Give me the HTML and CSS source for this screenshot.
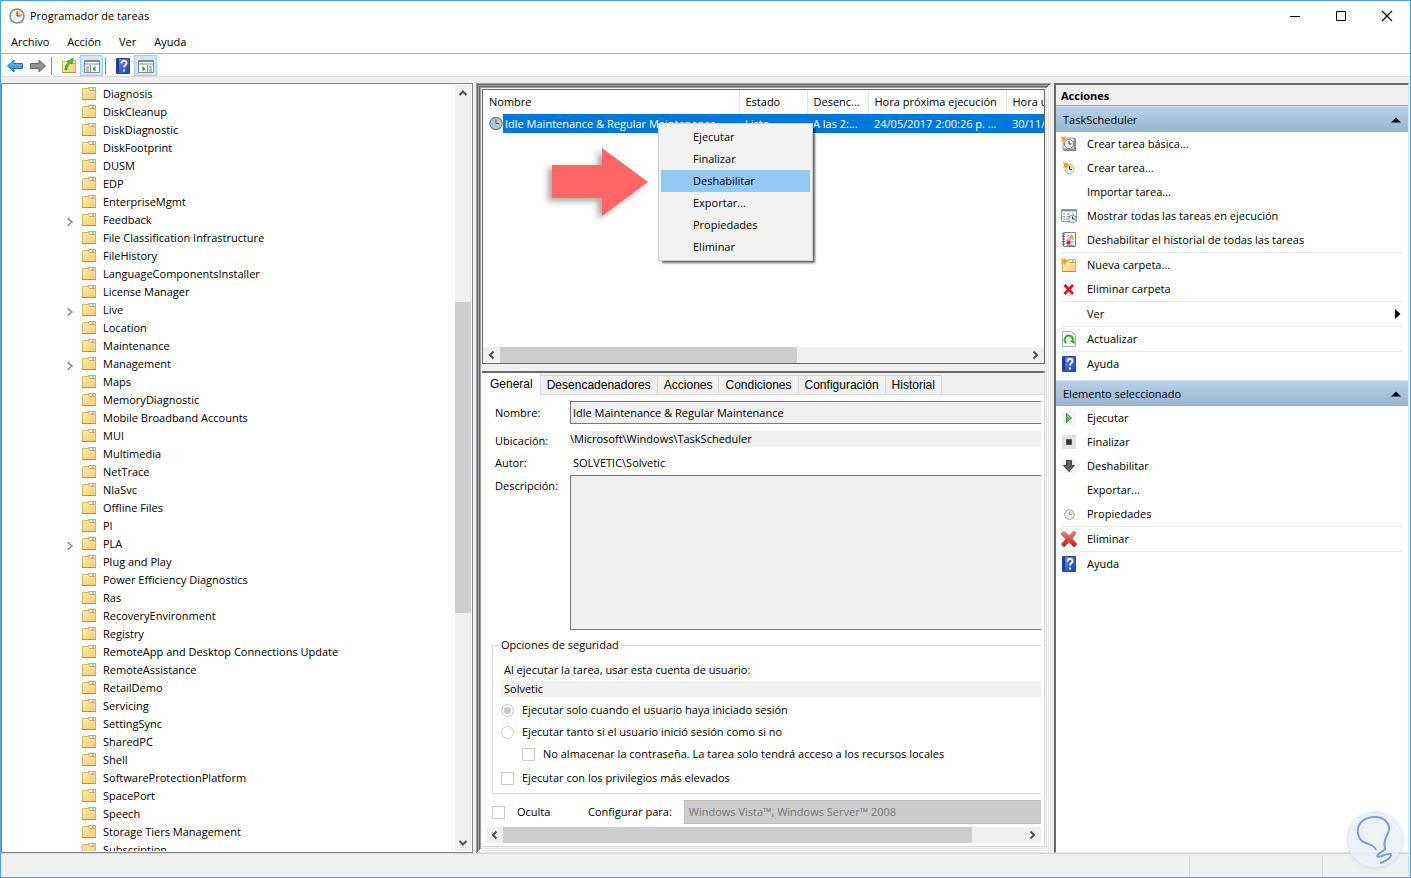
FILE: index.html
```
<!DOCTYPE html>
<html lang="es">
<head>
  <meta charset="UTF-8">
  <meta name="viewport" content="width=device-width, initial-scale=1.0">
  <title>Programador de tareas</title>
  <link rel="stylesheet" href="styles.css">
</head>
<body>
  <!-- shared icons -->
  <svg class="sprite" aria-hidden="true">
    <defs>
      <linearGradient id="g-folder" x1="0" y1="0" x2="1" y2="1"><stop offset="0" stop-color="#fce9ae"/><stop offset="1" stop-color="#f2cf74"/></linearGradient>
      <linearGradient id="g-blue" x1="0" y1="0" x2="0" y2="1"><stop offset="0" stop-color="#6fd0f8"/><stop offset="1" stop-color="#1585cc"/></linearGradient>
      <linearGradient id="g-help" x1="0" y1="0" x2="1" y2="1"><stop offset="0" stop-color="#6d92e6"/><stop offset="1" stop-color="#1f3fa8"/></linearGradient>
      <linearGradient id="g-green" x1="0" y1="0" x2="1" y2="1"><stop offset="0" stop-color="#9be37a"/><stop offset="1" stop-color="#1fa31a"/></linearGradient>
      <linearGradient id="g-red" x1="0" y1="0" x2="0" y2="1"><stop offset="0" stop-color="#f58a80"/><stop offset="1" stop-color="#d40c0c"/></linearGradient>
    </defs>
    <symbol id="i-folder" viewBox="0 0 14 14">
      <path d="M.5 1.500h13v11H.5z" fill="url(#g-folder)" stroke="#dcb565"/>
      <path d="M6.500.500h7v3H7.500z" fill="#fff3cf" stroke="#d3a955"/>
      <path d="M7.500 2h2.500" stroke="#fff"/>
      <path d="M10 2h2" stroke="#4b9fd6"/>
      <path d="M0 12.500h14" stroke="#b9924a"/>
    </symbol>
    <symbol id="i-clock" viewBox="0 0 16 16">
      <circle cx="8" cy="8" r="7" fill="#eef5fb" stroke="#8a8a8a" stroke-width="1.500"/>
      <path d="M8 8V2a6 6 0 0 1 6 6z" fill="#f5cf7a"/>
      <path d="M8 3.500V8h3.500" fill="none" stroke="#444"/>
    </symbol>
    <symbol id="i-clock-blue" viewBox="0 0 16 16">
      <circle cx="8" cy="8" r="7" fill="#a9c6e3" stroke="#667789" stroke-width="1.300"/>
      <path d="M8 8V2a6 6 0 0 1 6 6z" fill="#c5cfae"/>
      <path d="M8 3.500V8h3.500" fill="none" stroke="#3d4a58"/>
    </symbol>
    <symbol id="i-help" viewBox="0 0 16 16">
      <path d="M1.500.500h13v15h-13z" fill="url(#g-help)" stroke="#2747a8"/>
      <path d="M2 1h2v14H2z" fill="#1d3a93"/>
      <path d="M6.500 5.500C6.500 2 11.500 2 11.500 5c0 2-2.500 2.300-2.500 4.500M9 11.500v2" fill="none" stroke="#fff" stroke-width="1.800"/>
    </symbol>
    <symbol id="i-chevron" viewBox="0 0 8 8"><path d="M2 1l3.500 3L2 7" fill="none" stroke="currentColor" stroke-width="1.300"/></symbol>
    <symbol id="i-star" viewBox="0 0 8 8"><path d="M0 0l2.500 1.500L5 0l-.5 2.500L7 4l-2.500.5L4 7 2.500 5 0 6l1-2.500z" fill="#f5a01c"/></symbol>
    <symbol id="i-scroll" viewBox="0 0 16 16"><path d="M10 4.500L6.500 8l3.500 3.500" fill="none" stroke="#505050" stroke-width="2"/></symbol>
  </svg>

  <div class="window">
    <header class="titlebar">
      <svg class="app-icon"><use href="#i-clock"/></svg>
      <h1>Programador de tareas</h1>
      <div class="window-buttons">
        <button aria-label="Minimizar"><svg viewBox="0 0 12 12"><path d="M1 6.500h10" stroke="#000"/></svg></button>
        <button aria-label="Maximizar"><svg viewBox="0 0 12 12"><path d="M1.500 1.500h9v9h-9z" fill="none" stroke="#000"/></svg></button>
        <button aria-label="Cerrar"><svg viewBox="0 0 12 12"><path d="M1 1l10 10M11 1L1 11" stroke="#000" stroke-width="1.200"/></svg></button>
      </div>
    </header>

    <nav class="menubar">
      <button>Archivo</button>
      <button>Acción</button>
      <button>Ver</button>
      <button>Ayuda</button>
    </nav>

    <div class="toolbar">
      <button aria-label="Atrás"><svg viewBox="0 0 16 16"><path d="M.5 8L7 2v3.500h8.500v5H7V14z" fill="url(#g-blue)" stroke="#1b6fae"/></svg></button>
      <button aria-label="Adelante"><svg viewBox="0 0 16 16"><path d="M15.500 8L9 2v3.500H.5v5H9V14z" fill="#919191" stroke="#666"/></svg></button>
      <span class="divider"></span>
      <button aria-label="Subir un nivel"><svg viewBox="0 0 16 16"><use href="#i-folder" x="1" y="2" width="14" height="14"/><path d="M4 12C4 8 5 6 7.500 5L6 3.500 12 0l-1 6-1.500-1C7 7 6 9 6 12z" fill="#4cc02c" stroke="#2c8a1a" stroke-width=".6"/></svg></button>
      <button class="pressed" aria-label="Mostrar árbol"><svg viewBox="0 0 16 16"><path d="M.5 2.500h15v12H.5z" fill="#fff" stroke="#84888c"/><path d="M0 3.500h16M0 6h16M6.500 7v8" stroke="#84888c"/><path d="M2 9h3M2 11h3M2 13h3" stroke="#777"/><path d="M11.500 8v5.500L8.500 10.700z" fill="#25a51c"/></svg></button>
      <span class="divider"></span>
      <button aria-label="Ayuda"><svg><use href="#i-help"/></svg></button>
      <button class="pressed" aria-label="Mostrar acciones"><svg viewBox="0 0 16 16"><path d="M.5 2.500h15v12H.5z" fill="#fff" stroke="#84888c"/><path d="M0 3.500h16M0 6h16M9.500 7v8" stroke="#84888c"/><path d="M11 9h3M11 11h3M11 13h3" stroke="#777"/><path d="M4.500 8v5.500l3-2.800z" fill="#25a51c"/></svg></button>
    </div>

    <main>
      <section class="tree">
        <ul>
          <li><svg><use href="#i-folder"/></svg>Diagnosis</li>
          <li><svg><use href="#i-folder"/></svg>DiskCleanup</li>
          <li><svg><use href="#i-folder"/></svg>DiskDiagnostic</li>
          <li><svg><use href="#i-folder"/></svg>DiskFootprint</li>
          <li><svg><use href="#i-folder"/></svg>DUSM</li>
          <li><svg><use href="#i-folder"/></svg>EDP</li>
          <li><svg><use href="#i-folder"/></svg>EnterpriseMgmt</li>
          <li class="parent"><svg class="expander"><use href="#i-chevron"/></svg><svg><use href="#i-folder"/></svg>Feedback</li>
          <li><svg><use href="#i-folder"/></svg>File Classification Infrastructure</li>
          <li><svg><use href="#i-folder"/></svg>FileHistory</li>
          <li><svg><use href="#i-folder"/></svg>LanguageComponentsInstaller</li>
          <li><svg><use href="#i-folder"/></svg>License Manager</li>
          <li class="parent"><svg class="expander"><use href="#i-chevron"/></svg><svg><use href="#i-folder"/></svg>Live</li>
          <li><svg><use href="#i-folder"/></svg>Location</li>
          <li><svg><use href="#i-folder"/></svg>Maintenance</li>
          <li class="parent"><svg class="expander"><use href="#i-chevron"/></svg><svg><use href="#i-folder"/></svg>Management</li>
          <li><svg><use href="#i-folder"/></svg>Maps</li>
          <li><svg><use href="#i-folder"/></svg>MemoryDiagnostic</li>
          <li><svg><use href="#i-folder"/></svg>Mobile Broadband Accounts</li>
          <li><svg><use href="#i-folder"/></svg>MUI</li>
          <li><svg><use href="#i-folder"/></svg>Multimedia</li>
          <li><svg><use href="#i-folder"/></svg>NetTrace</li>
          <li><svg><use href="#i-folder"/></svg>NlaSvc</li>
          <li><svg><use href="#i-folder"/></svg>Offline Files</li>
          <li><svg><use href="#i-folder"/></svg>PI</li>
          <li class="parent"><svg class="expander"><use href="#i-chevron"/></svg><svg><use href="#i-folder"/></svg>PLA</li>
          <li><svg><use href="#i-folder"/></svg>Plug and Play</li>
          <li><svg><use href="#i-folder"/></svg>Power Efficiency Diagnostics</li>
          <li><svg><use href="#i-folder"/></svg>Ras</li>
          <li><svg><use href="#i-folder"/></svg>RecoveryEnvironment</li>
          <li><svg><use href="#i-folder"/></svg>Registry</li>
          <li><svg><use href="#i-folder"/></svg>RemoteApp and Desktop Connections Update</li>
          <li><svg><use href="#i-folder"/></svg>RemoteAssistance</li>
          <li><svg><use href="#i-folder"/></svg>RetailDemo</li>
          <li><svg><use href="#i-folder"/></svg>Servicing</li>
          <li><svg><use href="#i-folder"/></svg>SettingSync</li>
          <li><svg><use href="#i-folder"/></svg>SharedPC</li>
          <li><svg><use href="#i-folder"/></svg>Shell</li>
          <li><svg><use href="#i-folder"/></svg>SoftwareProtectionPlatform</li>
          <li><svg><use href="#i-folder"/></svg>SpacePort</li>
          <li><svg><use href="#i-folder"/></svg>Speech</li>
          <li><svg><use href="#i-folder"/></svg>Storage Tiers Management</li>
          <li><svg><use href="#i-folder"/></svg>Subscription</li>
        </ul>
        <div class="scrollbar vertical">
          <svg class="up"><use href="#i-scroll"/></svg>
          <div class="track"><span class="before"></span><span class="thumb"></span><span class="after"></span></div>
          <svg class="down"><use href="#i-scroll"/></svg>
        </div>
      </section>

      <section class="center">
        <div class="tasks">
          <div class="table-box">
            <table>
              <colgroup><col class="c-name"><col class="c-state"><col class="c-trigger"><col class="c-next"><col class="c-last"></colgroup>
              <thead>
                <tr><th>Nombre</th><th>Estado</th><th>Desenc...</th><th>Hora próxima ejecución</th><th>Hora ú</th></tr>
              </thead>
              <tbody>
                <tr><td class="name"><svg><use href="#i-clock-blue"/></svg><span>Idle Maintenance &amp; Regular Maintenance</span></td><td>Listo</td><td>A las 2:...</td><td>24/05/2017 2:00:26 p. ...</td><td>30/11/</td></tr>
              </tbody>
            </table>
          </div>
          <div class="scrollbar horizontal">
            <svg class="left"><use href="#i-scroll"/></svg>
            <div class="track"><span class="thumb"></span><span class="after"></span></div>
            <svg class="right"><use href="#i-scroll"/></svg>
          </div>

          <svg class="pointer" viewBox="0 0 110 84"><path d="M12 25h50V8l46 34-46 34V58H12z" fill="#ff6666"/></svg>
          <div class="context-menu" role="menu">
            <button role="menuitem">Ejecutar</button>
            <button role="menuitem">Finalizar</button>
            <button role="menuitem" class="active">Deshabilitar</button>
            <button role="menuitem">Exportar...</button>
            <button role="menuitem">Propiedades</button>
            <button role="menuitem">Eliminar</button>
          </div>
        </div>

        <div class="details">
          <div class="tabs" role="tablist">
            <button role="tab" class="current">General</button>
            <button role="tab">Desencadenadores</button>
            <button role="tab">Acciones</button>
            <button role="tab">Condiciones</button>
            <button role="tab">Configuración</button>
            <button role="tab">Historial</button>
          </div>
          <form>
            <div class="fields">
              <label for="name">Nombre:</label>
              <input id="name" class="boxed" type="text" readonly value="Idle Maintenance &amp; Regular Maintenance">
              <label for="place" class="low">Ubicación:</label>
              <input id="place" class="plain" type="text" readonly value="\Microsoft\Windows\TaskScheduler">
              <label for="author" class="author">Autor:</label>
              <output id="author" class="author">SOLVETIC\Solvetic</output>
              <label for="description" class="top">Descripción:</label>
              <textarea id="description" readonly></textarea>
            </div>
            <fieldset>
              <legend>Opciones de seguridad</legend>
              <label class="account" for="account">Al ejecutar la tarea, usar esta cuenta de usuario:</label>
              <input id="account" class="account-name" type="text" readonly value="Solvetic">
              <label class="option"><input type="radio" name="session" checked disabled>Ejecutar solo cuando el usuario haya iniciado sesión</label>
              <label class="option"><input type="radio" name="session" disabled>Ejecutar tanto si el usuario inició sesión como si no</label>
              <label class="option nested"><input type="checkbox" disabled>No almacenar la contraseña. La tarea solo tendrá acceso a los recursos locales</label>
              <label class="option last"><input type="checkbox" disabled>Ejecutar con los privilegios más elevados</label>
            </fieldset>
            <div class="form-footer">
              <label class="option"><input type="checkbox" disabled>Oculta</label>
              <label for="target">Configurar para:</label>
              <select id="target" disabled><option>Windows Vista™, Windows Server™ 2008</option></select>
            </div>
          </form>
          <div class="scrollbar horizontal wide">
            <svg class="left"><use href="#i-scroll"/></svg>
            <div class="track"><span class="thumb"></span><span class="after"></span></div>
            <svg class="right"><use href="#i-scroll"/></svg>
          </div>
        </div>
      </section>

      <aside class="actions">
        <h2>Acciones</h2>
        <h3>TaskScheduler <svg viewBox="0 0 10 6"><path d="M0 5.500L5 .5l5 5z"/></svg></h3>
        <div class="group">
          <button><svg viewBox="0 0 16 16"><path d="M2 2h12l1 2v11H3l-1-1z" fill="#8e8783"/><path d="M2 2h11v11H2z" fill="#f1ece8" stroke="#a09893"/><circle cx="8" cy="8" r="4.500" fill="#f8fbfd" stroke="#777"/><path d="M8 5v3h2.500" fill="none" stroke="#333"/><use href="#i-star" width="7" height="7"/></svg>Crear tarea básica...</button>
          <button><svg viewBox="0 0 16 16"><circle cx="8.500" cy="9" r="4.700" fill="#e8f1f8" stroke="#b8b8b0"/><path d="M9 9V5a4 4 0 0 1 4 4z" fill="#f4d07f"/><path d="M8.500 6v3.500H11" fill="none" stroke="#333"/><use href="#i-star" x="2" y="2" width="8" height="8"/></svg>Crear tarea...</button>
          <button><svg viewBox="0 0 16 16"></svg>Importar tarea...</button>
          <button><svg viewBox="0 0 16 16"><path d="M.5 1.500h15v12H.5z" fill="#fff" stroke="#999"/><path d="M0 2.500h16" stroke="#7b93ad" stroke-width="2"/><path d="M2 6h2M6 6h3M11 6h2M2 8.500h2M6 8.500h3M2 11h2M5 11h2" stroke="#888"/><circle cx="11.500" cy="11" r="3.800" fill="#dceaf5" stroke="#8c959c"/><path d="M11.500 8.500V11h2" fill="none" stroke="#333"/></svg>Mostrar todas las tareas en ejecución</button>
          <button><svg viewBox="0 0 16 16"><path d="M2.500.5h12v14h-12z" fill="#f8fafc" stroke="#71809a"/><path d="M1 2h3M1 4.500h3M1 7h3M1 9.500h3M1 12h3" stroke="#555"/><path d="M6 4h2M6 7h7M10 10h3M6 13.500h7" stroke="#7f93af"/><path d="M10.500 2l3 4h-6z" fill="#f2b31c"/><path d="M5.500 8.500h4v4h-4z" fill="#d9202c"/></svg>Deshabilitar el historial de todas las tareas</button>
        </div>
        <div class="group">
          <button><svg viewBox="0 0 16 16"><use href="#i-folder" x="1" y="2" width="14" height="14"/><use href="#i-star" x="0" y="1" width="8" height="8"/></svg>Nueva carpeta...</button>
          <button><svg viewBox="0 0 16 16"><path d="M1 2h14v13H1z" fill="#f5f5f5"/><path d="M3.500 4l8.500 9M12 4l-8.500 9" stroke="#d2162a" stroke-width="2.600"/></svg>Eliminar carpeta</button>
        </div>
        <div class="group">
          <button><svg viewBox="0 0 16 16"></svg>Ver<svg class="more" viewBox="0 0 6 10"><path d="M0 0l5.500 5L0 10z"/></svg></button>
        </div>
        <div class="group">
          <button><svg viewBox="0 0 16 16"><path d="M1.500.5h9l4 4v11h-13z" fill="#f6f8f6" stroke="#a9b0a9"/><path d="M5.500 12A4 4 0 1 1 11.500 10" fill="none" stroke="#35ae2e" stroke-width="2"/><path d="M8.500 9.500h5v4z" fill="#35ae2e"/></svg>Actualizar</button>
        </div>
        <div class="group">
          <button><svg><use href="#i-help"/></svg>Ayuda</button>
        </div>
        <h3 class="second">Elemento seleccionado <svg viewBox="0 0 10 6"><path d="M0 5.500L5 .5l5 5z"/></svg></h3>
        <div class="group">
          <button><svg viewBox="0 0 16 16"><path d="M1 1h14v14H1z" fill="#f5f5f5"/><path d="M5.500 3.500v9L10.500 8z" fill="url(#g-green)" stroke="#2aa51f"/></svg>Ejecutar</button>
          <button><svg viewBox="0 0 16 16"><path d="M1 1h14v14H1z" fill="#e2e2e2"/><path d="M5.500 5.500h5v5h-5z" fill="#2e3234" stroke="#555"/></svg>Finalizar</button>
          <button><svg viewBox="0 0 16 16"><path d="M1 1h14v14H1z" fill="#f5f5f5"/><path d="M5.500 2.500h5v5h3L8 13.500 2.500 7.500h3z" fill="#606060" stroke="#444"/></svg>Deshabilitar</button>
          <button><svg viewBox="0 0 16 16"></svg>Exportar...</button>
          <button><svg viewBox="0 0 16 16"><use href="#i-clock" x="3" y="3" width="11" height="11" opacity=".75"/></svg>Propiedades</button>
        </div>
        <div class="group">
          <button><svg viewBox="0 0 16 16"><path d="M0 3l3-2.500L8 5l4.500-5L15 2l-4 6 5 5-3 3-5-5-5 5-2.500-3L5 8z" fill="url(#g-red)" stroke="#b3262a" stroke-width=".6"/></svg>Eliminar</button>
        </div>
        <div class="group">
          <button><svg><use href="#i-help"/></svg>Ayuda</button>
        </div>
      </aside>
    </main>

    <footer class="statusbar"><span></span><span></span><span></span></footer>

    <svg class="brand" viewBox="0 0 60 60" aria-hidden="true">
      <circle cx="30" cy="30" r="27"/>
      <path d="M31 40C28 31 16 37 13 24C11 13 20 7 30 7C40 7 47 15 43 23C41 27 38 32 40 38C42 40 33 43 32 46C33 49 44 42 46 44C47 48 39 52 35 53"/>
    </svg>
  </div>
</body>
</html>
```
FILE: styles.css
```
* {
  box-sizing: border-box;
}
body {
  margin: 0;
  font-family: "Open Sans", "Noto Sans", sans-serif;
  font-size: 11px;
  line-height: 16px;
  color: #000;
}
button, input, select, textarea {
  font: inherit;
  color: inherit;
  margin: 0;
}
button {
  padding: 0;
  border: 0;
  background: none;
  text-align: left;
}
svg {
  display: block;
  flex: none;
  width: 16px;
  height: 16px;
}
.sprite {
  position: absolute;
  width: 0;
  height: 0;
}
.window {
  position: relative;
  display: flex;
  flex-direction: column;
  height: 100vh;
  border: 1px solid #4f9ff0;
  background: #f0f0f0;
}

/* title, menu and toolbar */
.titlebar {
  display: flex;
  align-items: center;
  height: 30px;
  padding-left: 8px;
  background: #fff;
}
.titlebar h1 {
  flex: 1;
  margin: 0 0 0 5px;
  font-size: 11px;
  font-weight: normal;
}
.window-buttons {
  display: flex;
}
.window-buttons button {
  display: grid;
  place-items: center;
  width: 46px;
  height: 28px;
}
.window-buttons svg {
  width: 12px;
  height: 12px;
}
.menubar {
  display: flex;
  align-items: center;
  gap: 18px;
  height: 22px;
  padding-left: 10px;
  background: #fff;
}
.toolbar {
  display: flex;
  align-items: center;
  height: 24px;
  padding: 1px 0 0 2px;
  border-top: 1px solid #aeb0b8;
  border-bottom: 1px solid #d9d9d9;
  background: #fff;
}
.toolbar button {
  display: grid;
  place-items: center;
  width: 23px;
  height: 21px;
}
.toolbar .pressed {
  border: 1px solid #99d1ff;
  background: #cce8ff;
}
.divider {
  width: 1px;
  height: 18px;
  margin: 0 5px 0 2px;
  background: #8d8d8d;
}

/* three columns */
main {
  flex: 1;
  display: grid;
  grid-template-columns: 472px minmax(0, 1fr) 355px;
  gap: 3px;
  min-height: 0;
  padding: 6px 1px 0 0;
}

/* folder tree */
.tree {
  display: flex;
  min-height: 0;
  padding: 1px 1px 1px 0;
  border: 1px solid #828790;
  background: #fff;
}
.tree ul {
  flex: 1;
  margin: 0;
  padding: 0;
  overflow: hidden;
  list-style: none;
}
.tree li {
  display: flex;
  align-items: center;
  gap: 7px;
  height: 18px;
  padding-left: 80px;
}
.tree li svg {
  width: 14px;
  height: 14px;
}
.tree .parent {
  padding-left: 63px;
}
.tree .parent .expander {
  width: 10px;
  height: 10px;
  margin-top: 4px;
  color: #8c8c8c;
}

/* scroll bars */
.scrollbar {
  display: flex;
  flex: none;
  background: #f0f0f0;
}
.scrollbar .track {
  flex: 1;
  display: flex;
}
.vertical {
  flex-direction: column;
  width: 16px;
}
.vertical .track {
  flex-direction: column;
}
.vertical .before {
  flex: 201;
}
.vertical .thumb {
  flex: 311;
}
.vertical .after {
  flex: 222;
}
.thumb {
  background: #cdcdcd;
}
.scrollbar .up {
  transform: rotate(90deg);
}
.scrollbar .down {
  transform: rotate(-90deg);
}
.scrollbar .right {
  transform: rotate(180deg);
}
.horizontal {
  height: 16px;
}
.horizontal svg {
  width: 17px;
}
.horizontal .thumb {
  flex: 298;
}
.horizontal .after {
  flex: 230;
}
.wide .thumb {
  flex: 469;
}
.wide .after {
  flex: 52;
}

/* task list */
.center {
  display: flex;
  flex-direction: column;
  min-height: 0;
  padding: 6px;
  background: #f0f0f0;
  box-shadow: inset 1px 1px #a0a0a0, inset -1px -1px #e3e3e3,
    inset 2px 2px #696969, inset -2px -2px #fff,
    inset 3px 3px #a0a0a0, inset -3px -3px #e3e3e3,
    inset 4px 4px #696969, inset -4px -4px #fff,
    inset 5px 5px #a0a0a0, inset -5px -5px #e3e3e3;
}
.tasks {
  position: relative;
  display: flex;
  flex: none;
  flex-direction: column;
  height: 275px;
  border: 1px solid #696969;
  background: #fff;
}
.table-box {
  flex: 1;
  overflow: hidden;
}
table {
  width: 100%;
  table-layout: fixed;
  border-collapse: collapse;
}
.c-name {
  width: 256px;
}
.c-state {
  width: 68px;
}
.c-trigger {
  width: 61px;
}
.c-next {
  width: 138px;
}
th, td {
  padding: 0 0 0 6px;
  overflow: hidden;
  font-weight: normal;
  text-align: left;
  white-space: nowrap;
}
th {
  height: 24px;
  border-right: 1px solid #e5e5e5;
}
th:last-child {
  border-right: 0;
}
td {
  height: 19px;
  color: #fff;
  background: #0078d7;
}
.name {
  display: flex;
  background: #fff;
}
.name svg {
  width: 14px;
  height: 19px;
}
.name span {
  flex: 1;
  line-height: 19px;
  padding-left: 2px;
  background: #0078d7;
}
.pointer {
  position: absolute;
  top: 50px;
  left: 57px;
  width: 110px;
  height: 84px;
  filter: drop-shadow(-4px 3px 3px rgba(0, 0, 0, 0.35));
}
.context-menu {
  position: absolute;
  top: 33px;
  left: 175px;
  width: 155px;
  padding: 2px;
  border: 1px solid #ccc;
  background: #f2f2f2;
  box-shadow: 3px 3px 2px -1px rgba(0, 0, 0, 0.6);
}
.context-menu button {
  display: block;
  width: 100%;
  height: 22px;
  padding-left: 32px;
}
.context-menu .active {
  background: #91c9f7;
}

/* task details */
.details {
  flex: 1;
  display: flex;
  flex-direction: column;
  min-height: 0;
  margin-top: 7px;
  padding: 0 3px 3px 1px;
  border-top: 2px solid #696969;
  border-right: 1px solid #dcdcdc;
  border-bottom: 1px solid #dcdcdc;
  background: #fff;
}
.tabs {
  display: flex;
  align-items: flex-end;
  height: 22px;
  margin-right: -3px;
  background: #f0f0f0;
  box-shadow: inset 0 -1px #d9d9d9;
}
.tabs button {
  height: 20px;
  padding: 0 6px;
  border: 1px solid #d9d9d9;
  border-left: 0;
  background: #f0f0f0;
  font-family: "Liberation Sans", Arial, sans-serif;
  font-size: 12px;
}
.tabs .current {
  height: 22px;
  padding: 0 7px;
  border-top: 0;
  border-bottom: 0;
  background: #fff;
}
form {
  flex: 1;
  display: flex;
  flex-direction: column;
  min-height: 0;
  overflow: hidden;
}
.fields {
  display: grid;
  grid-template-columns: 75px minmax(0, 1fr);
  padding: 6px 0 0 12px;
  align-items: center;
}
.fields input, .fields textarea {
  width: 100%;
  border: 0;
  outline: 0;
  background: #f0f0f0;
}
.fields .boxed, .fields textarea {
  border: 1px solid #7a7a7a;
  border-right: 0;
}
.fields .boxed {
  height: 23px;
  padding: 0 2px 1px;
}
.fields .plain {
  height: 16px;
  margin: 7px 0;
  padding: 0;
}
.low {
  padding-top: 3px;
}
.author {
  height: 21px;
  padding-top: 1px;
}
.fields output {
  padding-left: 3px;
}
.top {
  align-self: start;
  padding-top: 3px;
}
textarea {
  display: block;
  height: 155px;
  resize: none;
}
fieldset {
  min-width: 0;
  margin: 7px 0 0 9px;
  padding: 9px 0 2px 8px;
  border: 1px solid #dcdcdc;
  border-right: 0;
}
legend {
  padding: 0 2px;
  margin-left: -2px;
}
.account {
  display: block;
  padding-left: 3px;
}
.account-name {
  display: block;
  width: 100%;
  height: 16px;
  margin: 3px 0 2px;
  padding: 0 3px;
  border: 0;
  background: #f0f0f0;
}
.option {
  display: flex;
  align-items: center;
  gap: 8px;
  height: 22px;
  white-space: nowrap;
}
.option input {
  appearance: none;
  width: 13px;
  height: 13px;
  border: 1px solid #ccc;
  background: #fff;
}
.option input[type="radio"] {
  border-radius: 50%;
}
.option input:checked {
  background: #c6c6c6;
  box-shadow: inset 0 0 0 2px #fff;
}
.nested {
  padding-left: 21px;
}
.last {
  height: 26px;
}
.form-footer {
  display: flex;
  align-items: center;
  margin: 6px 0 0 9px;
}
.form-footer .option {
  gap: 12px;
  width: 96px;
}
.form-footer select {
  appearance: none;
  flex: 1;
  height: 24px;
  margin-left: 12px;
  padding: 0 4px;
  border: 1px solid #bfbfbf;
  border-right: 0;
  border-radius: 0;
  background: #ccc;
  color: #767676;
  opacity: 1;
}
.wide {
  margin-left: 3px;
}

/* actions */
.actions {
  min-width: 0;
  border: 1px solid #e3e3e3;
  border-top: 2px solid #696969;
  border-left: 2px solid #696969;
  background: #fff;
}
.actions h2, .actions h3 {
  display: flex;
  align-items: center;
  margin: 0;
  font-size: 11px;
}
.actions h2 {
  height: 21px;
  padding: 1px 5px 0;
  border-bottom: 1px solid #a0a0a0;
  background: #f0f0f0;
}
.actions h3 {
  justify-content: space-between;
  height: 26px;
  padding: 0 7px;
  border-top: 1px solid #d5e2f0;
  background: linear-gradient(#b9d0e9, #99b4d1);
  font-weight: normal;
}
.actions h3 svg {
  width: 10px;
  height: 6px;
}
.actions .second {
  margin-top: 4px;
}
.group {
  margin: 0 5px;
}
.group + .group {
  border-top: 1px solid #ebebeb;
}
.group button {
  display: flex;
  align-items: center;
  gap: 10px;
  width: 100%;
  height: 24px;
}
.group .more {
  width: 6px;
  height: 10px;
  margin: 0 2px 0 auto;
}

.statusbar {
  display: flex;
  justify-content: flex-end;
  height: 24px;
  padding: 2px 1px 1px 0;
  border-top: 1px solid #d7d7d7;
}
.statusbar span {
  width: 133px;
  border-right: 1px solid #d7d7d7;
}
.statusbar span:last-child {
  width: 86px;
}
.brand {
  position: absolute;
  right: 5px;
  bottom: 7px;
  width: 60px;
  height: 60px;
  filter: drop-shadow(0 0 2px #b8c8e0);
}
.brand circle {
  fill: rgba(255, 255, 255, 0.6);
  stroke: #e8eef7;
}
.brand path {
  fill: none;
  stroke: #7f9fcf;
  stroke-width: 2;
}
```
